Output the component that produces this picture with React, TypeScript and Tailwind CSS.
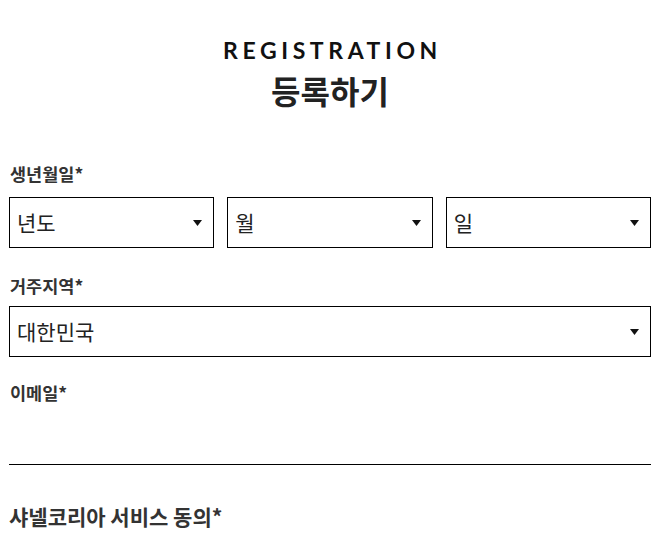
import { useState } from "react";

const kr = "font-['Noto_Sans_CJK_KR','Noto_Sans',sans-serif]";

function Caret() {
    return (
        <svg width="9" height="6" viewBox="0 0 9 6" className="shrink-0">
            <path d="M0 0H9L4.5 6Z" fill="#111" />
        </svg>
    );
}

function SelectBox({ value, className = "" }: { value: string; className?: string }) {
    return (
        <div className={`h-[51px] border border-black flex items-center justify-between pl-[7px] pr-[11px] ${className}`}>
            <span className={`${kr} text-[21px] text-[#222]`}>{value}</span>
            <Caret />
        </div>
    );
}

export default function App() {
    const [email, setEmail] = useState("");

    return (
        <div className="min-h-screen bg-white pl-[9px] pr-[15px] text-[#222]">
            {/* Header */}
            <div className="flex flex-col items-center pt-[36px]">
                <h2 className="font-['Lato',sans-serif] text-[23px] leading-[28px] tracking-[0.2em] pl-[5px] text-[#111] font-bold">REGISTRATION</h2>
                <h1 className={`${kr} text-[32px] leading-[44px] font-bold mt-[4px] text-[#222]`}>등록하기</h1>
            </div>

            {/* Birthday */}
            <div className="mt-[49px]">
                <label className={`${kr} block text-[17.5px] leading-[26px] font-bold pl-[1px] text-[#333]`}>생년월일*</label>
                <div className="grid grid-cols-3 gap-[13px] mt-[10px]">
                    <SelectBox value="년도" />
                    <SelectBox value="월" />
                    <SelectBox value="일" />
                </div>
            </div>

            {/* Country */}
            <div className="mt-[25px]">
                <label className={`${kr} block text-[17.5px] leading-[26px] font-bold pl-[1px] text-[#333]`}>거주지역*</label>
                <SelectBox value="대한민국" className="mt-[7px]" />
            </div>

            {/* Email */}
            <div className="mt-[23px]">
                <label className={`${kr} block text-[17.5px] leading-[26px] font-bold pl-[1px] text-[#333]`}>이메일*</label>
                <input
                    type="email"
                    value={email}
                    onChange={(e) => setEmail(e.target.value)}
                    className={`${kr} block w-full h-[59px] border-b border-black outline-none text-[18px]`}
                />
            </div>

            {/* Agreement */}
            <div className="mt-[36px]">
                <h3 className={`${kr} text-[21px] leading-[30px] font-bold text-[#333]`}>샤넬코리아 서비스 동의*</h3>
            </div>
        </div>
    );
}
